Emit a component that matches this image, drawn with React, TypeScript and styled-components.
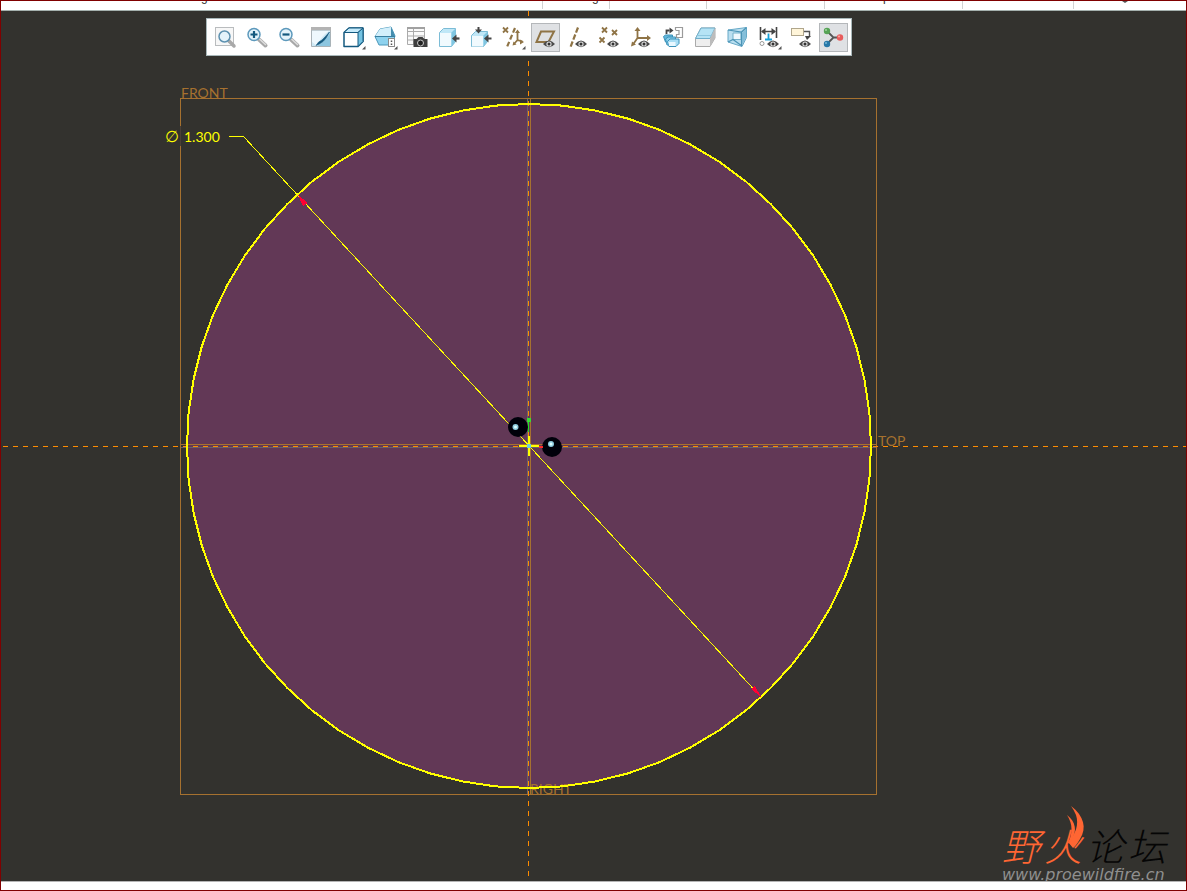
import React from "react";
import styled, { createGlobalStyle } from "styled-components";

const GlobalStyle = createGlobalStyle`
  *, *::before, *::after { box-sizing: border-box; }
  body { margin: 0; font-family: "Liberation Sans", Arial, sans-serif; }
`;

const colors = {
  frame: "#800000",
  canvas: "#33322e",
  section: "#623856",
  datum: "#a6712f",
  axis: "#ff8c00",
  sketch: "#ffff00",
  hidden: "#6b6266",
};

const Window = styled.div`
  display: flex;
  flex-direction: column;
  min-height: 100vh;
  border: 1px solid ${colors.frame};
  background: #ffffff;
`;

const RibbonEdge = styled.header`
  display: flex;
  flex: none;
  height: 10px;
  overflow: hidden;
  border-bottom: 1px solid #a5b1ae;
`;

const RibbonGroup = styled.div<{ $width?: number; $indent?: number }>`
  flex: ${(p) => (p.$width ? `0 0 ${p.$width}px` : "1 1 0")};
  height: 8px;
  padding-left: ${(p) => p.$indent ?? 0}px;
  border-right: ${(p) => (p.$width ? "1px solid #d2d2d2" : "none")};
  color: #333333;
  font-size: 12px;
  line-height: 14px;
  white-space: nowrap;
`;

const GroupLabel = styled.span`
  display: block;
  margin-top: -11px;
`;

const GroupCaret = styled.span`
  display: block;
  width: 0;
  border: 3px solid transparent;
  border-top: 2px solid #555555;
  border-bottom: 0;
`;

const Viewport = styled.main`
  position: relative;
  flex: 1 1 auto;
  min-height: 800px;
  overflow: hidden;
  background: ${colors.canvas};
`;

const StatusEdge = styled.footer`
  flex: none;
  height: 9px;
  border-top: 1px solid #b5b5b5;
  background: #ffffff;
`;

const Toolbar = styled.div`
  position: absolute;
  top: 7px;
  left: 205px;
  display: flex;
  gap: 3px;
  padding: 4px 3px 3px 4px;
  border: 1px solid #a9b8ba;
  background: #ffffff;
`;

const ToolButton = styled.button<{ $active?: boolean }>`
  display: flex;
  align-items: center;
  justify-content: center;
  width: 29px;
  height: 29px;
  padding: 0;
  border: 1px solid ${(p) => (p.$active ? "#b4b7ba" : "transparent")};
  background: ${(p) => (p.$active ? "#dfe1e4" : "transparent")};
`;

const Icon = styled.svg`
  flex: none;
  width: 25px;
  height: 25px;
`;

const Drawing = styled.svg`
  position: absolute;
  inset: 0;
  width: 100%;
  height: 100%;
`;

const DatumText = styled.text`
  fill: ${colors.datum};
  font-family: Lato, sans-serif;
  font-size: 14px;
  font-weight: 400;
`;

const DimensionText = styled.text`
  fill: ${colors.sketch};
  font-family: Lato, sans-serif;
  font-size: 14px;
`;

const DiameterSign = styled.text`
  fill: ${colors.sketch};
  font-family: "DejaVu Sans", sans-serif;
  font-size: 16px;
  font-style: italic;
`;

const Watermark = styled.div`
  position: absolute;
  right: 16px;
  bottom: -4px;
  display: flex;
  flex-direction: column;
  width: 168px;
`;

const ForumName = styled.div`
  position: relative;
  display: flex;
  gap: 4px;
  font-family: "Noto Sans CJK SC", sans-serif;
  font-size: 38px;
  font-style: italic;
  font-weight: 300;
  line-height: 40px;
`;

const Glyph = styled.span<{ $hot?: boolean }>`
  color: ${(p) => (p.$hot ? "#ff6633" : "#050505")};
`;

const Flame = styled.svg`
  position: absolute;
  left: 61px;
  top: -19px;
  width: 24px;
  height: 46px;
`;

const ForumUrl = styled.div`
  color: #8f8f8e;
  font-family: "DejaVu Sans", sans-serif;
  font-size: 16px;
  font-style: italic;
  line-height: 20px;
`;

const BROWN = "#8f7446";
const NAVY = "#14597f";

const Eye = ({ x = 16 }: { x?: number }) => (
  <g>
    <path d={`M${x - 6} 19Q${x} 12 ${x + 6} 19Q${x} 25.500 ${x - 6} 19Z`} fill="#4b4b4b" />
    <circle cx={x} cy="19" r="2.600" fill="#dddddd" />
    <circle cx={x} cy="19" r="1.500" fill="#333333" />
  </g>
);

const Flyout = () => <path d="M24.500 21v3.500H21Z" fill="#555555" />;

const Cross = ({ x, y }: { x: number; y: number }) => (
  <path d={`M${x - 2.5} ${y - 2.5}l5 5m0-5l-5 5`} stroke={BROWN} strokeWidth="1.800" />
);

const Lens = ({ sign }: { sign: string }) => (
  <>
    <path d="M14 14.500l6.500 6" stroke="#a8a8a8" strokeWidth="4" strokeLinecap="round" />
    <path d="M14.500 14l6.500 6" stroke="#dedede" strokeWidth="1.500" />
    <circle cx="9" cy="9.500" r="6" fill="#e3f3fb" stroke="#5d99bc" strokeWidth="1.500" />
    <path d={sign} stroke={NAVY} strokeWidth="2.200" />
  </>
);

const tools: { label: string; active?: boolean; art: React.ReactNode }[] = [
  {
    label: "Refit",
    art: (
      <>
        <rect x="2.500" y="2.500" width="18" height="18" fill="#f7f7f7" stroke="#b9bcbe" />
        <path d="M16 16l5 5" stroke="#a9a9a9" strokeWidth="3.500" strokeLinecap="round" />
        <circle cx="11.500" cy="11.500" r="5.500" fill="#e4f3fb" stroke="#5d91b0" strokeWidth="1.500" />
      </>
    ),
  },
  { label: "Zoom In", art: <Lens sign="M9 6v7M5.500 9.500h7" /> },
  { label: "Zoom Out", art: <Lens sign="M5.500 9.500h7" /> },
  {
    label: "Repaint",
    art: (
      <>
        <path d="M2.500 2.500h19v19h-19Z" fill="#cfe9f5" stroke="#a9b3b8" />
        <path d="M2 2h20v3.500H2Z" fill="#b3b3b3" />
        <path d="M3 6h17Q12 11 8 21L3 17Z" fill="#eef8fd" />
        <path d="M8 21Q15 17 21 8v13Z" fill="#8cc6e0" />
        <path d="M7 20.500Q9 16.500 13 15Q16 12 20.500 7Q17 14 14 16.500Q11 19 7 20.500Z" fill={NAVY} stroke={NAVY} strokeWidth="0.600" />
      </>
    ),
  },
  {
    label: "Display Style",
    art: (
      <>
        <path d="M3 7.500L8 3h14v13.500L17 21.500H3Z" fill="#fff" stroke={NAVY} strokeWidth="1.500" strokeLinejoin="round" />
        <path d="M3 7.500L8 3h14L17 7.500Z" fill="#c5eafa" stroke={NAVY} />
        <path d="M17 7.500L22 3v13.500L17 21.500Z" fill="#75c3e2" stroke={NAVY} />
        <Flyout />
      </>
    ),
  },
  {
    label: "Saved Orientations",
    art: (
      <>
        <path d="M2 11.500L7 4l11-2 4 9-3 9H6Z" fill="#8ed2ee" stroke="#4d99bb" />
        <path d="M7 4l11-2 1 9.500H2Z" fill="#d3effb" />
        <path d="M18 2l4 9.500h-4Z" fill="#458dae" />
        <path d="M2 11.500h20" stroke="#3a7e9f" />
        <rect x="15.500" y="13.500" width="6" height="8" fill="#fff" stroke="#8b8b8b" />
        <path d="M18.500 15.500v1.500m0 1.500v1.500" stroke="#555" strokeWidth="1.500" />
        <Flyout />
      </>
    ),
  },
  {
    label: "View Manager",
    art: (
      <>
        <path d="M2.500 2.500h17v17h-17ZM2.500 6.500h17M2.500 11h17M2.500 15h17M8.500 2.500v17" fill="#fafafa" stroke="#aaaaaa" />
        <path d="M2 2h18v2H2Z" fill="#a1a1a1" />
        <path d="M8.500 14h3l2-2h4l2 2h3v8h-14Z" fill="#3f3f3f" />
        <circle cx="15.500" cy="18" r="3" fill="#222" stroke="#c8c8c8" />
      </>
    ),
  },
  {
    label: "Section Left",
    art: (
      <>
        <path d="M2.500 7.500l4-4h12v13l-4 5h-12Z" fill="#bfe7f7" stroke="#7cbcd6" />
        <path d="M3 8h11v13H3Z" fill="#f1fafe" />
        <path d="M14.500 7.500l4-4v13l-4 5Z" fill="#80c6e1" />
        <path d="M22.500 13.500h-4" stroke="#444" strokeWidth="2.200" />
        <path d="M15 13.500l4.500-4v8Z" fill="#444" />
      </>
    ),
  },
  {
    label: "Section Top",
    art: (
      <>
        <path d="M2.500 10.500l4-4h12v10l-4 5h-12Z" fill="#bfe7f7" stroke="#7cbcd6" />
        <path d="M3 11h11v10.500H3Z" fill="#f1fafe" />
        <path d="M14.500 10.500l4-4v10l-4 5Z" fill="#80c6e1" />
        <path d="M22.500 13.500h-4M9.500 2v4" stroke="#444" strokeWidth="2" />
        <path d="M15 13.500l4.500-4v8ZM9.500 8.500l-3.500-4h7Z" fill="#444" />
      </>
    ),
  },
  {
    label: "Datum Display Filters",
    art: (
      <>
        <Cross x={4.5} y={5} />
        <path d="M14 3L6 22" stroke={BROWN} strokeWidth="2.200" strokeDasharray="5 2.500" />
        <path d="M16.500 7v8l5 1.500M16.500 15l-4 4.500" fill="none" stroke={BROWN} strokeWidth="1.800" />
        <path d="M16.500 4.500l2.500 3.500h-5ZM23 17l-4 2.500v-5ZM11.500 20.500l1-4 3 3Z" fill={BROWN} />
        <Flyout />
      </>
    ),
  },
  {
    label: "Plane Display",
    active: true,
    art: (
      <>
        <path d="M8 6.500h13l-5.500 10.500h-12Z" fill="none" stroke={BROWN} strokeWidth="2" />
        <Eye />
      </>
    ),
  },
  {
    label: "Axis Display",
    art: (
      <>
        <path d="M13 2.500L5.500 22" stroke={BROWN} strokeWidth="2.200" strokeDasharray="5.500 2" />
        <Eye />
      </>
    ),
  },
  {
    label: "Point Display",
    art: (
      <>
        <Cross x={7.5} y={5} />
        <Cross x={17.5} y={7.5} />
        <Cross x={5} y={15} />
        <Eye />
      </>
    ),
  },
  {
    label: "Csys Display",
    art: (
      <>
        <path d="M8.500 4v9h11M8.500 13L4 19.500" fill="none" stroke={BROWN} strokeWidth="1.800" />
        <path d="M8.500 2l3 4h-6ZM22 13l-4 3v-6ZM2 21.500l1-5 4 3Z" fill={BROWN} />
        <Eye x={15} />
      </>
    ),
  },
  {
    label: "Spin Center",
    art: (
      <>
        <path d="M2.500 11.500l2-1.500h7v5l-2 2h-5Z" fill="#62b7dc" stroke="#3d93ba" />
        <path d="M4.500 14l2.500-2h7.500v5l-3 3H6Z" fill="#85cdeb" stroke="#3d93ba" />
        <path d="M6.500 16.500l2.500-2.500h9v4.500l-3 3H8Z" fill="#a8ddf4" stroke="#3d93ba" />
        <path d="M7.500 17h7v4H8Z" fill="#e9f8ff" />
        <path d="M5.500 9V5.500h3" fill="none" stroke="#444" strokeWidth="1.800" />
        <path d="M12.500 5.500L8.500 2.500v6Z" fill="#444" />
        <path d="M14.500 5V2.500H21.500V12.500H15.500V9.500H18V5.500H14.500" fill="#fff" stroke="#9b9b9b" strokeWidth="1.200" />
      </>
    ),
  },
  {
    label: "Sketch View",
    art: (
      <>
        <path d="M2.500 13.500L8 3h14v10l-5 8.500H2.500Z" fill="#eeeeee" stroke="#aaaaaa" />
        <path d="M2.500 13.500L8 3h14l-5 10.500Z" fill="#b5e3f5" stroke="#6faeca" />
        <path d="M17 13.500L22 3v10l-5 8.500Z" fill="#bcbcbc" />
        <path d="M4.500 10.500h14" stroke="#8fc8e0" />
      </>
    ),
  },
  {
    label: "Perspective",
    art: (
      <>
        <path d="M3 5l18.500-2.500v10L17 21.500 3 17Z" fill="#badff0" stroke="#67a9c7" />
        <path d="M8 8h8v6.500H8Z" fill="#eef8fd" stroke="#72b0ca" />
        <path d="M3 5l13.500 2 5-4.500M16.500 7v14M3 17l5-2.500 9 6.500" fill="none" stroke="#4b94b6" strokeWidth="1.200" />
        <path d="M17 8l4-4.500v9L17 20Z" fill="#6db1d0" opacity="0.700" />
      </>
    ),
  },
  {
    label: "Dimension Display",
    art: (
      <>
        <path d="M3.500 2v13M19.500 2v11M5 6.500h13" stroke="#444" strokeWidth="1.600" />
        <path d="M4 6.500l4.500-3.500v7ZM19 6.500L14.500 3v7Z" fill="#444" />
        <path d="M11.500 8.500v6M8 14.500h7" stroke="#18a0d8" strokeWidth="1.800" />
        <circle cx="5" cy="18.500" r="2" fill="#fff" stroke="#999" />
        <Eye />
        <Flyout />
      </>
    ),
  },
  {
    label: "Annotation Display",
    art: (
      <>
        <rect x="2.500" y="3.500" width="12" height="7" fill="#fff5d9" stroke="#b0a68c" />
        <path d="M15 6.500h5.500V12" fill="none" stroke="#555" strokeWidth="1.400" />
        <path d="M16 11h6l-4 4Z" fill="#444" />
        <Eye />
      </>
    ),
  },
  {
    label: "3D Dragger",
    active: true,
    art: (
      <>
        <path d="M6 6l6.500 6.500L6 19M12.500 12.500H19" fill="none" stroke="#555" strokeWidth="1.800" />
        <circle cx="6" cy="6" r="3.200" fill="#56a356" />
        <circle cx="6" cy="19" r="3.200" fill="#2778a8" />
        <circle cx="19" cy="12.500" r="3.200" fill="#e85c5c" />
        <circle cx="5" cy="5" r="1" fill="#a5d3a0" />
        <circle cx="5" cy="18" r="1" fill="#7ab8d6" />
        <circle cx="18" cy="11.500" r="1" fill="#ffaaa5" />
      </>
    ),
  },
];

const CENTER = { x: 529, y: 446 };
const RADIUS = 342;
const SEGMENTS = 64;

const outline = Array.from({ length: SEGMENTS }, (_, i) => {
  const a = (i / SEGMENTS) * Math.PI * 2;
  const x = CENTER.x + RADIUS * Math.cos(a);
  const y = CENTER.y + RADIUS * Math.sin(a);
  return `${x.toFixed(1)},${y.toFixed(1)}`;
}).join(" ");

const Sketch = () => (
  <Drawing viewBox="1 11 1185 870" preserveAspectRatio="xMinYMin slice" role="img" aria-label="Circle sketch, diameter 1.300">
    <g shapeRendering="crispEdges" fill="none">
      <polygon points={outline} fill={colors.section} />
      <path d="M527.500 99V794M181 447.500H876" stroke={colors.hidden} />
      <path d="M180.500 98.500H876.500V794.500H180.500Z" stroke={colors.datum} />
      <path d="M180.500 126V146" stroke="#4a3f37" />
      <path d="M530.500 99V794M181 444.500H876" stroke={colors.datum} />
      <path d="M528.500 11V877M3 446.500H1187" stroke={colors.axis} strokeDasharray="5 5" />
    </g>
    <DatumText x="181" y="98">FRONT</DatumText>
    <DatumText x="878" y="446">TOP</DatumText>
    <DatumText x="530" y="794">RIGHT</DatumText>
    <g shapeRendering="crispEdges" fill="none">
      <polygon points={outline} stroke={colors.sketch} strokeWidth="2" />
      <path d="M229 136.500H243.500L760 696" stroke={colors.sketch} />
      <path d="M298 195L308 203L303 206ZM761 697L751 689L755 686Z" fill="#ff0033" />
    </g>
    <DiameterSign x="165" y="142">∅</DiameterSign>
    <DimensionText x="184" y="142">1.300</DimensionText>
    <g>
      <circle cx="518" cy="427" r="10" fill="#00000a" />
      <circle cx="515.500" cy="427" r="3" fill="#8dcbe0" />
      <circle cx="515.500" cy="427" r="1.500" fill="#dcffff" />
      <circle cx="552" cy="447" r="10" fill="#00000a" />
      <circle cx="551" cy="444" r="3" fill="#8dcbe0" />
      <circle cx="551" cy="444" r="1.500" fill="#dcffff" />
    </g>
    <g shapeRendering="crispEdges">
      <path d="M528.500 422V432" stroke="#21e021" />
      <path d="M527 418h4v4h-4Z" fill="#32e032" />
      <path d="M539 446.500H543" stroke="#ff2a2a" strokeWidth="2" />
      <path d="M519 446H539M529 436V456" stroke="#ffff00" strokeWidth="2" />
      <path d="M527 444h4v4h-4Z" fill="#6fd0d8" />
    </g>
  </Drawing>
);

export default function App() {
  return (
    <>
      <GlobalStyle />
      <Window>
        <RibbonEdge>
          <RibbonGroup $width={542} $indent={154}><GroupLabel>Sketching</GroupLabel></RibbonGroup>
          <RibbonGroup $width={67} $indent={19}><GroupLabel>Editing</GroupLabel></RibbonGroup>
          <RibbonGroup $width={97} />
          <RibbonGroup $width={118} />
          <RibbonGroup $width={138} $indent={42}><GroupLabel>Inspect</GroupLabel></RibbonGroup>
          <RibbonGroup $width={111} />
          <RibbonGroup $indent={48}><GroupCaret /></RibbonGroup>
        </RibbonEdge>
        <Viewport>
          <Sketch />
          <Toolbar role="toolbar" aria-label="Graphics toolbar">
            {tools.map((t) => (
              <ToolButton key={t.label} type="button" aria-label={t.label} aria-pressed={!!t.active} $active={t.active}>
                <Icon viewBox="0 0 25 25" fill="none" aria-hidden="true">{t.art}</Icon>
              </ToolButton>
            ))}
          </Toolbar>
          <Watermark>
            <ForumName>
              <Glyph $hot>野</Glyph>
              <Glyph $hot>火</Glyph>
              <Glyph>论</Glyph>
              <Glyph>坛</Glyph>
              <Flame viewBox="0 0 24 46" aria-hidden="true">
                <path d="M8 0C21 10 24 22 17 33Q13 40 10 42L5 36C13 28 16 18 13 9Q11 4 8 0Z" fill="#ff6633" />
                <path d="M4 9C13 16 14 25 9 33L4 39C10 28 10 18 4 9Z" fill="#ff6633" />
              </Flame>
            </ForumName>
            <ForumUrl>www.proewildfire.cn</ForumUrl>
          </Watermark>
        </Viewport>
        <StatusEdge />
      </Window>
    </>
  );
}
